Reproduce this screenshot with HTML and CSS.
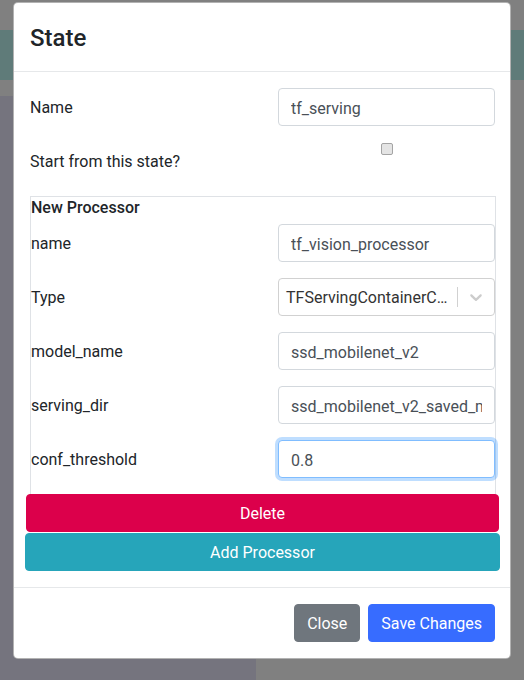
FILE: index.html
```html
<!DOCTYPE html>
<html lang="en">
<head>
<meta charset="utf-8">
<title>State</title>
<link rel="stylesheet" href="styles.css">
</head>
<body>
<div class="page">
  <div class="page-band"></div>
  <div class="page-side"></div>
</div>

<div class="modal">
  <div class="modal-header">
    <h5 class="modal-title">State</h5>
  </div>
  <div class="modal-body">
    <div class="form-row">
      <label class="col-label">Name</label>
      <input class="form-control" type="text" value="tf_serving">
    </div>
    <div class="form-row">
      <label class="col-label">Start from this state?</label>
      <div class="check-col"><input class="check" type="checkbox"></div>
    </div>

    <div class="processor">
      <h6 class="processor-title">New Processor</h6>
      <div class="form-row">
        <label class="col-label">name</label>
        <input class="form-control" type="text" value="tf_vision_processor">
      </div>
      <div class="form-row">
        <label class="col-label">Type</label>
        <div class="select">
          <div class="select-value">TFServingContainerC…</div>
          <span class="select-sep"></span>
          <span class="select-ind">
            <svg width="20" height="20" viewBox="0 0 20 20"><path fill="currentColor" d="M4.516 7.548c0.436-0.446 1.043-0.481 1.576 0l3.908 3.747 3.908-3.747c0.533-0.481 1.141-0.446 1.574 0 0.436 0.445 0.408 1.197 0 1.615-0.406 0.418-4.695 4.502-4.695 4.502-0.217 0.223-0.502 0.335-0.787 0.335s-0.57-0.112-0.789-0.335c0 0-4.287-4.084-4.695-4.502s-0.436-1.17 0-1.615z"/></svg>
          </span>
        </div>
      </div>
      <div class="form-row">
        <label class="col-label">model_name</label>
        <input class="form-control" type="text" value="ssd_mobilenet_v2">
      </div>
      <div class="form-row">
        <label class="col-label">serving_dir</label>
        <input class="form-control" type="text" value="ssd_mobilenet_v2_saved_model">
      </div>
      <div class="form-row">
        <label class="col-label">conf_threshold</label>
        <input class="form-control focus" type="text" value="0.8">
      </div>
    </div>
    <button class="btn btn-delete" type="button">Delete</button>
    <button class="btn btn-add" type="button">Add Processor</button>
  </div>
  <div class="modal-footer">
    <button class="btn btn-close" type="button">Close</button>
    <button class="btn btn-save" type="button">Save Changes</button>
  </div>
</div>
</body>
</html>
```

FILE: styles.css
```css
* { box-sizing: border-box; }

html, body {
  margin: 0;
  height: 680px;
  overflow: hidden;
}

body {
  background: #808080;
  font-family: Roboto, "Liberation Sans", sans-serif;
  font-size: 16px;
  line-height: 1.5;
  color: #212529;
  position: relative;
}

.page {
  height: 680px;
  display: flex;
  flex-direction: column;
}

.page-band {
  margin-top: 30px;
  height: 50px;
  background: #5f7b79;
}

.page-side {
  margin-top: 16px;
  width: 256px;
  flex: 1;
  background: #75747e;
}

.modal {
  position: absolute;
  top: 2px;
  left: 13px;
  width: 498px;
  background: #fff;
  border: 1px solid rgba(0, 0, 0, 0.3);
  border-radius: 5px;
}

.modal-header {
  padding: 17px 16px 15px;
  border-bottom: 1px solid #e6e8ea;
}

.modal-title {
  margin: 0;
  font-size: 24px;
  font-weight: 500;
  line-height: 1.5;
}

.modal-body {
  padding: 16px 15px 16px 16px;
  display: flex;
  flex-direction: column;
}

.form-row {
  display: grid;
  grid-template-columns: 1fr 217px;
  margin-bottom: 16px;
}

.col-label {
  padding: 8px 0 6px;
  line-height: 1.5;
}

.form-control {
  display: block;
  width: 217px;
  height: 38px;
  padding: 7px 12px 5px;
  font-family: inherit;
  font-size: 16px;
  line-height: 1.5;
  color: #495057;
  background: #fff;
  border: 1px solid #d3d8dd;
  border-radius: 4px;
  outline: none;
}

.form-control.focus {
  border-color: #80bdff;
  box-shadow: 0 0 0 3px rgba(0, 123, 255, 0.25);
}

.check-col {
  display: flex;
  justify-content: center;
}

.check {
  appearance: none;
  -webkit-appearance: none;
  width: 12px;
  height: 12px;
  margin: 1px 0 0 0;
  background: #e4e4e4;
  border: 1px solid #a4a4a4;
  border-radius: 2px;
}

.processor {
  margin: 0 -1px 0 0;
  border: 1px solid #dfe2e6;
  border-bottom: none;
}

.processor-title {
  margin: 0 0 8px 0;
  padding-top: 1px;
  font-size: 16px;
  font-weight: 500;
  line-height: 1.2;
  height: 19px;
}

.select {
  display: flex;
  align-items: center;
  width: 217px;
  height: 38px;
  border: 1px solid #d1d1d1;
  border-radius: 4px;
  background: #fff;
}

.select-value {
  flex: 1;
  min-width: 0;
  padding: 1px 4px 0 7px;
  white-space: nowrap;
  overflow: hidden;
  color: #333;
}

.select-sep {
  width: 1px;
  align-self: stretch;
  margin: 8px 0;
  background: #d1d1d1;
}

.select-ind {
  display: flex;
  padding: 8px;
  color: #cccccc;
}

.btn {
  display: block;
  height: 38px;
  padding: 7px 12px 5px;
  font-family: inherit;
  font-size: 16px;
  line-height: 1.5;
  color: #fff;
  border: 1px solid transparent;
  border-radius: 4px;
  text-align: center;
}

.btn-delete {
  margin: 0 -4px 0 -4px;
  background: #dc004b;
  border-color: #dc004b;
}

.btn-add {
  margin: 1px -5px 0 -5px;
  background: #26a5ba;
  border-color: #26a5ba;
}

.modal-footer {
  display: flex;
  justify-content: flex-end;
  gap: 8px;
  padding: 16px 15px 16px 16px;
  border-top: 1px solid #e6e8ea;
}

.btn-close {
  background: #6f767d;
  border-color: #6f767d;
}

.btn-save {
  background: #376cff;
  border-color: #376cff;
}
```
